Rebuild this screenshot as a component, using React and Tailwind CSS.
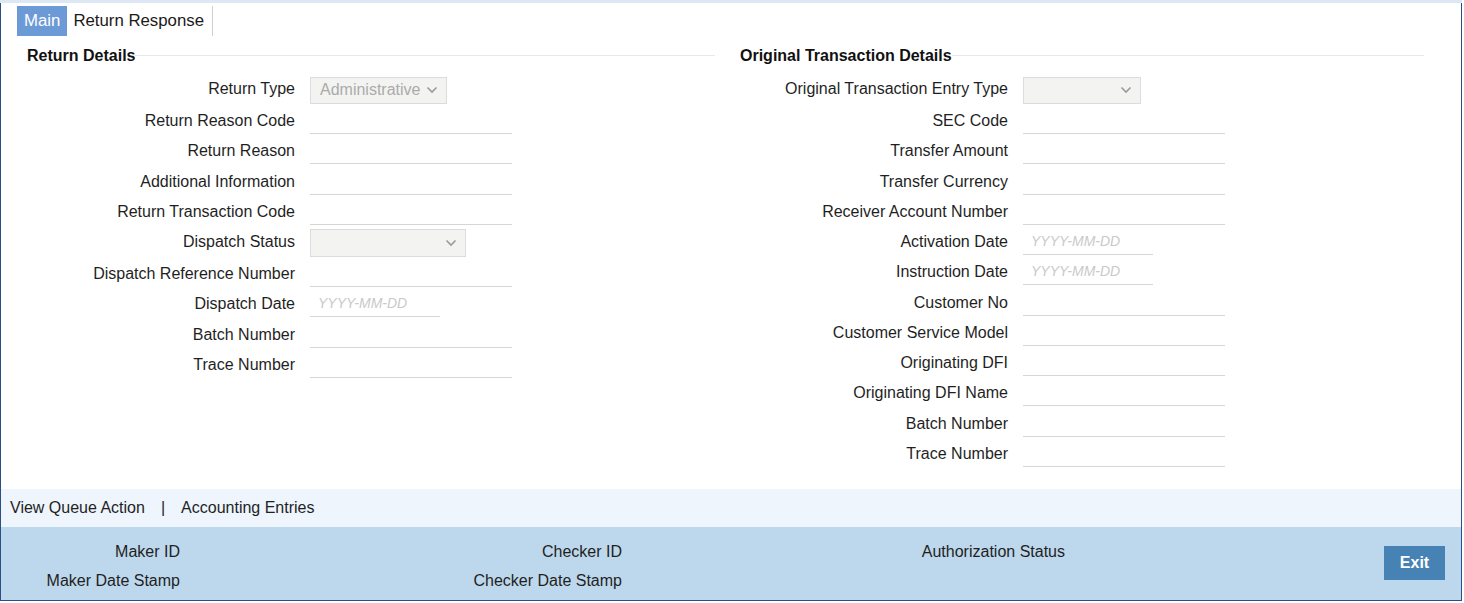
import React from "react";

const Chevron = () => (
  <svg width="12" height="8" viewBox="0 0 12 8" className="shrink-0">
    <path d="M1.5 1.5 L6 6 L10.5 1.5" fill="none" stroke="#9a9a9a" strokeWidth="1.6" />
  </svg>
);

function Select({ w, h, value }) {
  return (
    <div
      className={`${w} ${h} bg-[#f3f3f1] border border-[#dcdcdc] flex items-center justify-between pl-[9px] pr-[8px]`}
    >
      <span className="text-[#ababab] leading-none">{value}</span>
      <Chevron />
    </div>
  );
}

function Row({ label, kind = "text", selW, selH, selValue }) {
  let field;
  if (kind === "select") {
    field = <Select w={selW} h={selH} value={selValue} />;
  } else if (kind === "date") {
    field = (
      <div className="w-[130px] h-[26px] border-b border-[#d6d6d6] flex items-center pl-[8px]">
        <span className="italic text-[14px] text-[#c9c9c9]">YYYY-MM-DD</span>
      </div>
    );
  } else {
    field = <div className="w-[202px] h-[26px] border-b border-[#d6d6d6]" />;
  }
  const isSel = kind === "select";
  return (
    <div className={`flex items-center ${isSel ? "h-[32px]" : "h-[30.25px]"}`}>
      <div className={`w-[278px] text-right text-[#1f1f1f] whitespace-nowrap ${isSel ? "pb-[2px]" : ""}`}>
        {label}
      </div>
      <div className="ml-[15px]">{field}</div>
    </div>
  );
}

function Heading({ title }) {
  return (
    <div className="flex items-center h-[24px] mt-[8px]">
      <span className="pl-[10px] font-bold text-[#111] whitespace-nowrap">{title}</span>
      <div className="flex-1 h-px bg-[#e8e8e8] -mt-[2px]" />
    </div>
  );
}

export default function App() {
  return (
    <div className="w-[1462px] font-['Liberation_Sans',Arial,sans-serif] text-[16px] bg-white">
      <div className="h-[3px] bg-[#dde8f5]" />
      <div className="h-[598px] border-x border-b border-[#2b4f85] flex flex-col">
        <div className="h-[486px] bg-white pl-[16px]">
          <div className="flex items-stretch h-[30px] mt-[3px] text-[16.8px]">
            <div className="bg-[#6b9ad6] text-white px-[7px] flex items-center">Main</div>
            <div className="pl-[6px] pr-[8px] flex items-center border-r border-[#cfcfcf] text-[#1a1a1a]">
              Return Response
            </div>
          </div>
          <div className="flex">
            <div className="w-[698px]">
              <Heading title="Return Details" />
              <div className="mt-[6px]">
                <Row label="Return Type" kind="select" selW="w-[137px]" selH="h-[27px]" selValue="Administrative" />
                <Row label="Return Reason Code" />
                <Row label="Return Reason" />
                <Row label="Additional Information" />
                <Row label="Return Transaction Code" />
                <Row label="Dispatch Status" kind="select" selW="w-[156px]" selH="h-[28px]" selValue="" />
                <Row label="Dispatch Reference Number" />
                <Row label="Dispatch Date" kind="date" />
                <Row label="Batch Number" />
                <Row label="Trace Number" />
              </div>
            </div>
            <div className="w-[694px] ml-[15px]">
              <Heading title="Original Transaction Details" />
              <div className="mt-[6px]">
                <Row label="Original Transaction Entry Type" kind="select" selW="w-[118px]" selH="h-[27px]" selValue="" />
                <Row label="SEC Code" />
                <Row label="Transfer Amount" />
                <Row label="Transfer Currency" />
                <Row label="Receiver Account Number" />
                <Row label="Activation Date" kind="date" />
                <Row label="Instruction Date" kind="date" />
                <Row label="Customer No" />
                <Row label="Customer Service Model" />
                <Row label="Originating DFI" />
                <Row label="Originating DFI Name" />
                <Row label="Batch Number" />
                <Row label="Trace Number" />
              </div>
            </div>
          </div>
        </div>
        <div className="h-[38px] bg-[#eef5fd] flex items-center pl-[9px] text-[#1f1f1f]">
          <span>View Queue Action</span>
          <span className="mx-[16px]">|</span>
          <span>Accounting Entries</span>
        </div>
        <div className="flex-1 bg-[#bdd8ec] flex">
          <div className="flex pt-[10px] text-[#1f1f1f]">
            <div className="w-[442px]">
              <div className="w-[179px] h-[29px] flex items-center justify-end">Maker ID</div>
              <div className="w-[179px] h-[29px] flex items-center justify-end whitespace-nowrap">Maker Date Stamp</div>
            </div>
            <div className="w-[442px]">
              <div className="w-[179px] h-[29px] flex items-center justify-end">Checker ID</div>
              <div className="w-[179px] h-[29px] flex items-center justify-end whitespace-nowrap">Checker Date Stamp</div>
            </div>
            <div className="w-[442px]">
              <div className="w-[180px] h-[29px] flex items-center justify-end whitespace-nowrap">Authorization Status</div>
            </div>
          </div>
          <div className="ml-auto mr-[16px] mt-[19px]">
            <button className="w-[61px] h-[34px] bg-[#4682b4] text-white font-bold flex items-center justify-center">
              Exit
            </button>
          </div>
        </div>
      </div>
    </div>
  );
}
